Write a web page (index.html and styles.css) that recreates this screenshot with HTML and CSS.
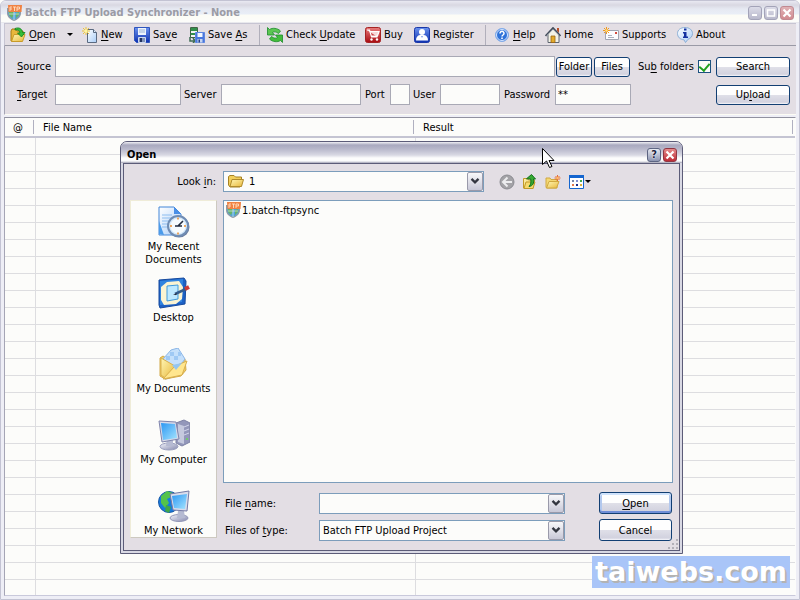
FILE: index.html
```html
<!DOCTYPE html>
<html lang="en">
<head>
<meta charset="utf-8">
<title>Batch FTP Upload Synchronizer - None</title>
<link rel="stylesheet" href="styles.css">
</head>
<body>
<svg class="defs" aria-hidden="true">
  <defs>
    <linearGradient id="gold" x1="0" y1="0" x2="1" y2="1"><stop offset="0" stop-color="#fff6b4"/><stop offset="1" stop-color="#e8b83c"/></linearGradient>
    <linearGradient id="screen" x1="0" y1="0" x2="1" y2="1"><stop offset="0" stop-color="#2d97f2"/><stop offset="1" stop-color="#a4e4ff"/></linearGradient>
    <linearGradient id="metal" x1="0" y1="0" x2="1" y2="1"><stop offset="0" stop-color="#f4f5fb"/><stop offset="1" stop-color="#8488ae"/></linearGradient>
    <linearGradient id="blue" x1="0" y1="0" x2="0" y2="1"><stop offset="0" stop-color="#6c93ee"/><stop offset="1" stop-color="#0c2fb0"/></linearGradient>
    <linearGradient id="red" x1="0" y1="0" x2="0" y2="1"><stop offset="0" stop-color="#e87c7c"/><stop offset="1" stop-color="#a80a10"/></linearGradient>
    <linearGradient id="page" x1="0" y1="0" x2="1" y2="1"><stop offset="0" stop-color="#ffffff"/><stop offset="1" stop-color="#a9cdf8"/></linearGradient>
    <symbol id="app" viewBox="0 0 16 16">
      <path d="M1 3h14v5c0 4-3 6.500-7 8C4 14.500 1 12 1 8z" fill="#8f9aa6"/>
      <path d="M2.500 6h11v3c0 2.500-2.500 4.500-5.500 5.700C5 13.500 2.500 11.500 2.500 9z" fill="#4fa5d8"/>
      <path d="M3 7l4-1 1 3-2 4-3-3zM10 8l3-1v3l-3 3z" fill="#69b365"/>
      <path d="M8 6v9M3 9h10" stroke="#d6e7ef" stroke-width=".7"/>
      <path d="M2 0h14l-.5 7H2.500z" fill="#f08243"/>
      <path d="M4 6V2h2M4 4h2M7 2h3M8.500 2V6M11 6V2h2.500v2H11" fill="none" stroke="#ffe0c4" stroke-width=".9"/>
    </symbol>
    <symbol id="open" viewBox="0 0 16 16">
      <path d="M1 14V4l1-2h4l1 2h6v3L11 14z" fill="#e9b73c" stroke="#a67a13"/>
      <path d="M1.500 14.500L4 7.500h11l-2.500 7z" fill="url(#gold)" stroke="#c89a28"/>
      <path d="M5 1.500c4-1.500 7 0 7.500 4H15L11.500 10 7.500 6H10C9.700 3.500 8 2.300 5 3z" fill="#35bd38" stroke="#0c811a" stroke-width=".8"/>
    </symbol>
    <symbol id="new" viewBox="0 0 16 16">
      <path d="M5.500 2.500h6l3 3v10h-9z" fill="url(#page)" stroke="#5b6a80"/>
      <path d="M11.500 2.500v3h3" fill="#dcecff" stroke="#5b6a80"/>
      <path d="M4 0v8M0 4h8M1 1l6 6M7 1L1 7" stroke="#edc33a"/><circle cx="4" cy="4" r="1.800" fill="#fff5a0"/>
    </symbol>
    <symbol id="save" viewBox="0 0 16 16">
      <path d="M.5.5h15v15h-13l-2-2z" fill="url(#blue)" stroke="#2f55bd"/>
      <path d="M4 1h8v7H4z" fill="#edf4fd"/><path d="M5 3h6M5 5h6" stroke="#9bb2d5"/>
      <path d="M4.500 10.500h7v5h-7z" fill="#8193b8" stroke="#cdd9f1"/><path d="M6 11h2v4H6z" fill="#22335f"/>
    </symbol>
    <symbol id="saveas" viewBox="0 0 16 16">
      <path d="M1.500.5h7v10h-7z" fill="#f4f4f4" stroke="#426346"/><path d="M2 1h6v3H2zM2 6h4v2H2z" fill="#31904a"/>
      <path d="M1 10v4h4M4 11l2 3-2 2" fill="none" stroke="#3f6c54" stroke-width="1.500"/>
      <path d="M6.500 5.500h9v10h-9z" fill="#4976dd" stroke="#5d86e0"/>
      <path d="M8.500 6h5v4h-5z" fill="#f3f8ff"/><path d="M8.500 12h5v3.500h-5z" fill="#c5d5f1"/><path d="M9.500 12.500h1.500v3H9.500z" fill="#233f82"/>
    </symbol>
    <symbol id="update" viewBox="0 0 16 16">
      <path d="M.5.5l2 2c3-2 8-1.500 11 1.500L11.500 6.500C9 4.500 7 4.500 5.500 5.500L7.500 8h-7z" fill="#5cc652" stroke="#1d8b2b" stroke-width=".8"/>
      <path d="M15.500 15.500l-2-2c-3 2-8 1.500-11-1.500L4.500 9.500c2.500 2 4.500 2 6 1L8.500 8h7z" fill="#43bd3b" stroke="#1d8b2b" stroke-width=".8"/>
    </symbol>
    <symbol id="buy" viewBox="0 0 16 16">
      <rect x=".5" y=".5" width="15" height="15" rx="2" fill="url(#red)" stroke="#a52323"/>
      <path d="M2 3h2.500l2 7h6M5 4.500h9L12.500 9H6.200" fill="#f7d9d9" stroke="#fff" stroke-width="1.200"/><circle cx="6.500" cy="12.500" r="1.200" fill="#fff"/><circle cx="12" cy="12.500" r="1.200" fill="#fff"/>
    </symbol>
    <symbol id="register" viewBox="0 0 16 16">
      <rect x=".5" y=".5" width="15" height="15" rx="2" fill="url(#blue)" stroke="#1a37a8"/>
      <path d="M2 13.500c0-3.500 1.500-5 4-5.500h4c2.500.5 4 2 4 5.500z" fill="#fff"/><circle cx="8" cy="5" r="3" fill="#fff"/><path d="M7 9h2l-1 2z" fill="#7f9ce9"/>
    </symbol>
    <symbol id="help" viewBox="0 0 16 16">
      <circle cx="8" cy="8" r="6.500" fill="#2e72d9" stroke="#86aee9"/><circle cx="8" cy="8" r="5.500" fill="none" stroke="#d6e6ff"/>
      <path d="M6 6.500c0-3 4.200-2.700 4 0C10 8 8 8 8 9.500" fill="none" stroke="#fff" stroke-width="1.500"/><path d="M7.200 10.500h1.600V12H7.200z" fill="#fff"/>
    </symbol>
    <symbol id="home" viewBox="0 0 16 16">
      <path d="M3 7v8.500h11V7L8 2z" fill="#f3f2e5" stroke="#5f6571"/><path d="M12 1h2v5l-2-2z" fill="#b95028"/>
      <path d="M.5 9L8 1l7.500 8" fill="none" stroke="#434d5b" stroke-width="1.800"/><path d="M2 8.500L8 2.500l6 6" fill="none" stroke="#cbd2d8" stroke-width=".8"/>
      <path d="M6 9h4v6.500H6z" fill="#e3ab2a" stroke="#9a6413" stroke-width=".8"/>
    </symbol>
    <symbol id="mail" viewBox="0 0 16 16">
      <path d="M2.500 3.500h13v9h-13z" fill="#fbfbfe" stroke="#a0a4b2"/><path d="M5 8.500h4M5 10.500h6" stroke="#aaafbd"/><path d="M12 5h2v2h-2z" fill="#d4493c"/>
      <path d="M3.500 0v7M0 3.500h7M1 1l5 5M6 1L1 6" stroke="#f09820"/><circle cx="3.500" cy="3.500" r="1.300" fill="#ffe17c"/>
    </symbol>
    <symbol id="about" viewBox="0 0 16 16">
      <path d="M8 .5c4.500 0 7.500 2.500 7.500 6 0 3-2 5-4.500 5.800L8.500 15.500 7 12.800C3 12.500.5 10 .5 6.500.5 3 3.500.5 8 .5z" fill="url(#page)" stroke="#8caed4"/>
      <path d="M7 1.500h2.500v2H7zM6 5h3.500v4.500H11V11H6V9.500h1v-3H6z" fill="#1431a0"/>
    </symbol>
    <symbol id="folder" viewBox="0 0 16 16">
      <path d="M.5 12V3.500l1.500-1h4l1.500 1.500h6v8.500L12 14H2z" fill="#f2cf5b" stroke="#a68224"/>
      <path d="M2 13.500L4 6.500h11.500l-2 7z" fill="url(#gold)" stroke="#b08b2c"/>
    </symbol>
    <symbol id="back" viewBox="0 0 16 16">
      <circle cx="8" cy="8" r="7" fill="#a3a2a6" stroke="#8c8c92"/><path d="M8.500 3.500L4 8l4.500 4.500M4.500 8H13" fill="none" stroke="#ececee" stroke-width="2"/>
    </symbol>
    <symbol id="up" viewBox="0 0 16 16">
      <path d="M1.500 14V4.500h4l1 1.500h6L11 14.500z" fill="url(#gold)" stroke="#c19a29"/><path d="M2 14.500L4 8h9l-2 6.500z" fill="#f7da6e" stroke="#c19a29"/>
      <path d="M4.500 4.800L9.500.5l4 4.500h-2c.7 4-.5 7-4.500 7.500 2-2 2.200-4.500 1.700-7.500z" fill="#37aa33" stroke="#11711b"/>
    </symbol>
    <symbol id="newfolder" viewBox="0 0 16 16">
      <path d="M1 13V4h4l1 1.500h6V14H1.500z" fill="#f4d873" stroke="#d0a840"/><path d="M1.500 14L4 7.500h10L11.500 14z" fill="url(#gold)" stroke="#d0a840"/>
      <path d="M12.500 1v6M9.500 4h6M10.500 2l4 4M14.500 2l-4 4" stroke="#e56b35"/><circle cx="12.500" cy="4" r="1.300" fill="#ffbb68"/>
    </symbol>
    <symbol id="views" viewBox="0 0 16 16">
      <path d="M1.500 1.500h14v13h-14z" fill="#fff" stroke="#1566cf"/><path d="M1 1h15v3H1z" fill="#1566cf"/>
      <path d="M4 6h2v2H4z" fill="#7788a8"/><path d="M8 6h2v2H8z" fill="#8390d1"/><path d="M12 6h2v2h-2z" fill="#43a74b"/><path d="M4 10h2v2H4z" fill="#e47a4a"/><path d="M8 10h2v2H8z" fill="#1b2d8b"/><path d="M12 10h2v2h-2z" fill="#dab03c"/>
    </symbol>
    <symbol id="recent" viewBox="0 0 32 32">
      <path d="M1 1h15l7 7v21H1z" fill="url(#page)" stroke="#4386d8"/><path d="M16 1v7h7z" fill="#4a8fe7"/>
      <path d="M4 9h10M4 12h13M4 15h8M4 18h6M4 21h6" stroke="#8dbdf0"/><path d="M1 28V15l5 14z" fill="#4b9bea"/>
      <circle cx="21" cy="21" r="10.500" fill="#6a7c9d"/><circle cx="20" cy="20" r="10" fill="#d5e9fa" stroke="#6f8cb4" stroke-width="2"/><circle cx="20" cy="20" r="7.500" fill="#f6fbff"/>
      <path d="M20 11.500v2M20 26.500v2M12 20h2M26 20h2" stroke="#ef8c2a" stroke-width="1.500"/><path d="M20 20l5-5M17 20h7" stroke="#222b40" stroke-width="1.600"/>
    </symbol>
    <symbol id="desktop" viewBox="0 0 32 32">
      <path d="M1 3l25-2 2 3-1 23L2 31 1 28z" fill="#1c61c5" stroke="#174b9e"/><path d="M2 4l23-2-1 23L2 28z" fill="#3184df"/>
      <path d="M3 10l6-5 12-1 4 6-1 12-6 5-12 1-3-5z" fill="#fbf4d2"/><path d="M9 9l11-1v14L9 24z" fill="#bee9ff" stroke="#419bdc"/>
      <path d="M17 17l11-5" stroke="#345d8d" stroke-width="2.500"/><path d="M27 12l4-2" stroke="#ce3b36" stroke-width="4"/><path d="M15 18l4-2-1 2z" fill="#292e3c"/>
    </symbol>
    <symbol id="documents" viewBox="0 0 32 32">
      <path d="M6 29l20-3 4-13-4 13-19 6z" fill="#888a8a" opacity=".5"/>
      <path d="M2 10l3-2 6 4 16-1 1 11-5 6-16 3-5-3z" fill="#f4ce62" stroke="#d3aa4a"/>
      <path d="M5 11L13 2l7-2 7 11-9 12z" fill="#c5e0fb" stroke="#8bb6e6"/><path d="M12 4h4v4h4v4h-4V8h-4zM20 4h3v4h-3zM8 8h4v4H8z" fill="#9fc9f4"/>
      <path d="M3 10l14 8-10 12-4-3z" fill="url(#gold)" stroke="#d9b04e"/><path d="M5 31l12-13 12-5-5 14z" fill="#ffe68e" stroke="#d9b04e"/><path d="M14 17l10-2-6 7z" fill="#94c5f0"/>
    </symbol>
    <symbol id="computer" viewBox="0 0 32 32">
      <path d="M18 4l8-3 6 3v19l-8 4-6-3z" fill="#9397ba" stroke="#7e82a5"/><path d="M20 5l6 2v18l-6-2z" fill="#c5c9de"/><path d="M26 8l5-2M26 12l5-2M26 16l5-2" stroke="#d2d5eb"/><circle cx="29" cy="20" r="1" fill="#65dd55"/>
      <ellipse cx="11" cy="27.500" rx="9" ry="3.500" fill="url(#metal)" stroke="#9a9ebd"/><path d="M9 20h6v7H8z" fill="#b6bad2"/>
      <path d="M1 2l17 1 3 17-17 3z" fill="#d7d9e9" stroke="#7f84ac"/><path d="M3 4l14 1 2 14-14 2z" fill="url(#screen)"/>
    </symbol>
    <symbol id="network" viewBox="0 0 32 32">
      <circle cx="11" cy="12" r="10.500" fill="#187bdc" stroke="#1558a7"/><path d="M3 6l6-5 6 2-2 4-4 2 2 4-4 5-4-5z" fill="#54c34b"/><path d="M8 15l5 2-2 6-4-2z" fill="#40a748"/>
      <ellipse cx="21" cy="28" rx="9" ry="3.500" fill="url(#metal)" stroke="#9196b7"/><path d="M20 21h6l1 7h-8z" fill="#b5bad2"/>
      <path d="M12 4l19-3-2 20-14-1z" fill="#d9dceb" stroke="#747aa4"/><path d="M14 6l15-2-2 15-11-1z" fill="url(#screen)"/>
    </symbol>
    <symbol id="chevron" viewBox="0 0 16 16"><path d="M4 5l4 4 4-4" fill="none" stroke="#333640" stroke-width="2.600"/></symbol>
    <symbol id="caret" viewBox="0 0 6 3"><path d="M0 0h6L3 3z" fill="#000"/></symbol>
  </defs>
</svg>

<div class="window">
  <header class="titlebar">
    <svg class="icon"><use href="#app"/></svg>
    <h1>Batch FTP Upload Synchronizer - None</h1>
    <div class="captions">
      <button class="caption" aria-label="Minimize"><svg viewBox="0 0 12 12"><path d="M3 8h5" stroke="#fff" stroke-width="2"/></svg></button>
      <button class="caption" aria-label="Maximize"><svg viewBox="0 0 12 12"><path d="M2.500 3h7v6h-7z" fill="none" stroke="#fff" stroke-width="1.500"/></svg></button>
      <button class="caption close" aria-label="Close"><svg viewBox="0 0 12 12"><path d="M2.500 2.500l7 7M9.500 2.500l-7 7" stroke="#fff" stroke-width="2.200"/></svg></button>
    </div>
  </header>

  <nav class="toolbar" aria-label="Main">
    <button class="tool"><svg class="icon"><use href="#open"/></svg><span><u>O</u>pen</span><svg class="caret"><use href="#caret"/></svg></button>
    <button class="tool"><svg class="icon"><use href="#new"/></svg><span><u>N</u>ew</span></button>
    <button class="tool"><svg class="icon"><use href="#save"/></svg><span>Sa<u>v</u>e</span></button>
    <button class="tool"><svg class="icon"><use href="#saveas"/></svg><span>Save <u>A</u>s</span></button>
    <i class="divider"></i>
    <button class="tool"><svg class="icon"><use href="#update"/></svg><span>Check <u>U</u>pdate</span></button>
    <button class="tool"><svg class="icon"><use href="#buy"/></svg><span>Buy</span></button>
    <button class="tool"><svg class="icon"><use href="#register"/></svg><span>Register</span></button>
    <i class="divider"></i>
    <button class="tool"><svg class="icon"><use href="#help"/></svg><span><u>H</u>elp</span></button>
    <button class="tool"><svg class="icon"><use href="#home"/></svg><span>Home</span></button>
    <button class="tool"><svg class="icon"><use href="#mail"/></svg><span>Supports</span></button>
    <button class="tool"><svg class="icon"><use href="#about"/></svg><span>About</span></button>
  </nav>

  <form class="settings">
    <div class="row">
      <label class="lead" for="source"><u>S</u>ource</label>
      <input class="field grow" id="source" type="text">
      <button class="btn small" type="button">Folder</button>
      <button class="btn small" type="button">Files</button>
      <label class="sub" for="sub">Su<u>b</u> folders</label>
      <input class="check" id="sub" type="checkbox" checked>
      <button class="btn action" type="button">Search</button>
    </div>
    <div class="row">
      <label class="lead" for="target"><u>T</u>arget</label>
      <input class="field target" id="target" type="text">
      <label class="server-label" for="server">Server</label>
      <input class="field server" id="server" type="text">
      <label class="port-label" for="port">Port</label>
      <input class="field port" id="port" type="text">
      <label class="user-label" for="user">User</label>
      <input class="field user" id="user" type="text">
      <label class="pass-label" for="pass">Password</label>
      <input class="field pass" id="pass" type="text" value="**">
      <button class="btn action" type="button">Up<u>l</u>oad</button>
    </div>
  </form>

  <main class="list">
    <table>
      <thead><tr><th class="mark">@</th><th class="name">File Name</th><th class="result">Result</th></tr></thead>
      <tbody>
        <tr><td></td><td></td><td></td></tr><tr><td></td><td></td><td></td></tr><tr><td></td><td></td><td></td></tr>
        <tr><td></td><td></td><td></td></tr><tr><td></td><td></td><td></td></tr><tr><td></td><td></td><td></td></tr>
        <tr><td></td><td></td><td></td></tr><tr><td></td><td></td><td></td></tr><tr><td></td><td></td><td></td></tr>
        <tr><td></td><td></td><td></td></tr><tr><td></td><td></td><td></td></tr><tr><td></td><td></td><td></td></tr>
        <tr><td></td><td></td><td></td></tr><tr><td></td><td></td><td></td></tr><tr><td></td><td></td><td></td></tr>
        <tr><td></td><td></td><td></td></tr><tr><td></td><td></td><td></td></tr><tr><td></td><td></td><td></td></tr>
        <tr><td></td><td></td><td></td></tr><tr><td></td><td></td><td></td></tr><tr><td></td><td></td><td></td></tr>
        <tr><td></td><td></td><td></td></tr><tr><td></td><td></td><td></td></tr><tr><td></td><td></td><td></td></tr>
        <tr><td></td><td></td><td></td></tr><tr><td></td><td></td><td></td></tr><tr><td></td><td></td><td></td></tr>
      </tbody>
    </table>
  </main>
</div>

<p class="watermark">taiwebs.com</p>

<section class="dialog" role="dialog" aria-labelledby="dialog-title">
  <header class="dialog-title">
    <h2 id="dialog-title">Open</h2>
    <div class="captions">
      <button class="caption query" aria-label="Help">?</button>
      <button class="caption close" aria-label="Close"><svg viewBox="0 0 12 12"><path d="M2.500 2.500l7 7M9.500 2.500l-7 7" stroke="#fff" stroke-width="2.200"/></svg></button>
    </div>
  </header>
  <div class="dialog-body">
    <div class="lookin">
      <label for="look">Look <u>i</u>n:</label>
      <span class="combo has-icon">
        <svg class="icon lead-icon"><use href="#folder"/></svg>
        <select id="look"><option>1</option></select>
        <svg class="drop"><use href="#chevron"/></svg>
      </span>
      <div class="navtools">
        <button aria-label="Back"><svg class="icon"><use href="#back"/></svg></button>
        <button aria-label="Up one level"><svg class="icon"><use href="#up"/></svg></button>
        <button aria-label="Create new folder"><svg class="icon"><use href="#newfolder"/></svg></button>
        <button class="view" aria-label="View menu"><svg class="icon"><use href="#views"/></svg><svg class="caret"><use href="#caret"/></svg></button>
      </div>
    </div>
    <nav class="places" aria-label="Places">
      <button><svg><use href="#recent"/></svg>My Recent<br>Documents</button>
      <button><svg><use href="#desktop"/></svg>Desktop</button>
      <button><svg><use href="#documents"/></svg>My Documents</button>
      <button><svg><use href="#computer"/></svg>My Computer</button>
      <button><svg><use href="#network"/></svg>My Network</button>
    </nav>
    <div class="files">
      <button class="file"><svg class="icon"><use href="#app"/></svg>1.batch-ftpsync</button>
    </div>
    <div class="choose">
      <label for="fname">File <u>n</u>ame:</label>
      <span class="combo">
        <input id="fname" type="text">
        <svg class="drop"><use href="#chevron"/></svg>
      </span>
      <button class="btn default"><u>O</u>pen</button>
      <label for="ftype">Files of <u>t</u>ype:</label>
      <span class="combo">
        <select id="ftype"><option>Batch FTP Upload Project</option></select>
        <svg class="drop"><use href="#chevron"/></svg>
      </span>
      <button class="btn">Cancel</button>
    </div>
  </div>
  <svg class="grip" viewBox="0 0 12 12"><path d="M9 1h2v2H9zM5 5h2v2H5zM9 5h2v2H9zM1 9h2v2H1zM5 9h2v2H5zM9 9h2v2H9z" fill="#b3b0b8"/></svg>
</section>

<svg class="pointer" viewBox="0 0 13 20"><path d="M.5.5v16l4-3.500 3 6.500 2.500-1-3-6h5z" fill="#fff" stroke="#000"/></svg>
</body>
</html>
```
FILE: styles.css
```css
* { box-sizing: border-box; }

html, body { height: 100%; }

body {
  margin: 0;
  overflow: hidden;
  position: relative;
  background: #fcfcfa;
  color: #000;
  font: 11px/13px "DejaVu Sans Condensed", "Noto Sans", sans-serif;
}

button, input, select { font: inherit; color: inherit; }
button { padding: 0; border: 0; background: none; white-space: nowrap; }
u { text-underline-offset: 2px; text-decoration-thickness: 1px; }
h1, h2, p { margin: 0; }
h1, h2 { font-size: 11px; line-height: 14px; }
svg { display: block; flex: none; }

.defs { position: absolute; width: 0; height: 0; }
.icon { width: 16px; height: 16px; }
.caret { width: 6px; height: 3px; }

/* main window */
.window {
  height: 100vh;
  display: flex;
  flex-direction: column;
  border: 1px solid #c3c3d3;
  border-radius: 6px 6px 0 0;
  padding: 0 3px 3px;
  background: #eeeef6;
}

.titlebar {
  flex: none;
  height: 22px;
  display: flex;
  align-items: center;
  gap: 3px;
  padding: 2px 5px 0 5px;
  margin: 0 -3px;
  background: linear-gradient(#e9e9f2 0, #d9d8e2 4px, #e6e9f2 8px, #e9eef7 13px, #fcfcf6 14px, #fcfcfa 21px, #d5d5e0 22px);
  border-radius: 5px 5px 0 0;
}
.titlebar h1 { flex: 1; color: #9b9ba5; }

.captions { display: flex; gap: 2px; }
.caption {
  width: 14px;
  height: 14px;
  border: 1px solid #a3a3b8;
  border-radius: 3px;
  background: linear-gradient(#dcdce8, #b9b9cc);
}
.caption svg { width: 12px; height: 12px; }
.caption.close { border-color: #c08991; background: linear-gradient(#e0b2b6, #d18b90); }

.toolbar {
  flex: none;
  height: 23px;
  display: grid;
  grid-template-columns: 72px 52px 55px 70px 8px 98px 49px 71px 9px 51px 58px 74px 1fr;
  align-items: center;
  padding-left: 5px;
  border: 1px solid #c7c5d3;
  border-width: 1px 0 1px 1px;
  border-bottom-color: #9a9aa6;
  background: #e3dee4;
}
.tool { display: flex; align-items: center; gap: 3px; }
.tool .caret { margin-left: 9px; }
.divider { width: 1px; height: 20px; background: #b1afbb; }

.settings {
  flex: none;
  display: flex;
  flex-direction: column;
  gap: 7px;
  padding: 10px 6px 9px 12px;
  border-left: 1px solid #a5a5b5;
  border-bottom: 1px solid #fcfcf4;
  background: #e3dee4;
}
.row { display: flex; align-items: center; }
.row label { white-space: nowrap; }
.field {
  height: 21px;
  min-width: 0;
  border: 1px solid #a9a9b5;
  background: #fcfcfa;
  padding: 0 2px;
}
.grow { flex: 1; }
.lead { width: 38px; }
.target { width: 126px; }
.server { width: 140px; }
.port { width: 20px; }
.user { width: 60px; }
.pass { width: 76px; }
.server-label { width: 40px; padding-left: 3px; }
.port-label { width: 29px; padding-left: 4px; }
.user-label { width: 30px; padding-left: 3px; }
.pass-label { width: 55px; padding-left: 4px; }

.btn {
  height: 20px;
  border: 1px solid #123f73;
  border-radius: 3px;
  background: linear-gradient(#fefefe 0 48%, #dfdfe8 52%, #d2d2df 90%, #f8f8fc);
}
.small { width: 36px; margin-left: 1px; }
.small + .small { margin-left: 2px; }
.action { width: 74px; margin-left: auto; }
.sub { width: 60px; margin-left: 8px; }
.check {
  appearance: none;
  width: 13px;
  height: 13px;
  margin: 0 5px 0 0;
  border: 1px solid #1c5180;
  background: #fcfcfa;
  display: grid;
  place-items: center;
}
.check:checked::after {
  content: "";
  width: 5px;
  height: 8px;
  margin-bottom: 2px;
  border: solid #21a121;
  border-width: 0 2px 2px 0;
  transform: rotate(40deg);
}

.list {
  flex: 1;
  min-height: 0;
  overflow: hidden;
  margin-top: 2px;
  border-top: 1px solid #91919f;
  border-left: 1px solid #a5a5b5;
  border-right: 1px solid #fcfcfa;
  border-bottom: 1px solid #c9c9db;
  background: #fcfcfa;
}
table { width: 100%; border-collapse: separate; border-spacing: 0; table-layout: fixed; }
th {
  height: 20px;
  padding: 0 0 0 7px;
  text-align: left;
  font-weight: normal;
  border-bottom: 2px solid #c4c4d2;
  background: linear-gradient(#b0b0c0, #b0b0c0) right 2px center / 1px 14px no-repeat;
}
th.mark { width: 31px; padding-left: 8px; }
th.name { width: 380px; }
td { height: 17px; padding: 0; border-right: 1px solid #dddde0; border-bottom: 1px solid #dddde0; }
td:last-child { border-right: 0; }

/* open dialog */
.dialog {
  position: absolute;
  left: 120px;
  top: 141px;
  width: 563px;
  border: 1px solid #5c5c78;
  border-radius: 7px 7px 0 0;
  padding: 0 2px 2px;
  background: #d9d9e4;
}
.dialog-title {
  height: 21px;
  display: flex;
  align-items: center;
  justify-content: space-between;
  padding: 4px 5px 0 6px;
  margin: 0 -2px;
  border-radius: 6px 6px 0 0;
  background: linear-gradient(#f0f0f5 0, #a9a9bf 3px, #b8b8cb 7px, #d8d8e3 13px, #fcfcfc 16px, #fcfcfc 19px, #a1a1b3 21px);
}
.dialog .caption { border-color: #5c6482; background: linear-gradient(#e4e7f0, #8d95b2); }
.dialog .caption.close { border-color: #913643; background: linear-gradient(#e58b8c, #bd2b35); }
.dialog .query { color: #1c2340; font-weight: bold; line-height: 12px; text-shadow: 0 0 1px #fff, 0 0 2px #fff; }

.dialog-body {
  display: grid;
  grid-template-columns: 87px 1fr;
  grid-template-rows: 21px 283px 50px;
  column-gap: 6px;
  row-gap: 8px;
  padding: 7px 6px 9px 6px;
  border: 1px solid #5c5c78;
  background: #e3dee4;
}
.lookin { grid-column: 1 / 3; display: flex; align-items: center; }
.lookin label { width: 93px; padding-right: 7px; text-align: right; }
.lookin .combo { width: 261px; }
.navtools { display: flex; gap: 7px; padding-left: 15px; }
.navtools .view { display: flex; align-items: center; gap: 1px; }

.combo { position: relative; display: block; height: 21px; }
.combo select, .combo input {
  appearance: none;
  display: block;
  width: 100%;
  height: 21px;
  padding: 0 20px 0 3px;
  border: 1px solid #7c9dbb;
  border-radius: 0;
  background: #fcfcfa;
}
.combo.has-icon select { padding-left: 25px; }
.lead-icon { position: absolute; left: 5px; top: 2px; }
.drop {
  position: absolute;
  right: 1px;
  top: 1px;
  width: 16px;
  height: 19px;
  border: 1px solid #9a9aaa;
  border-radius: 2px;
  background: linear-gradient(#f8f8fa, #c8c8d7);
  pointer-events: none;
}

.places {
  grid-row: 2 / 4;
  height: 338px;
  overflow: hidden;
  padding-top: 5px;
  border: 1px solid #cdc9c0;
  border-top-color: #efecd8;
  border-left-color: #efecd8;
  background: #fcfcfa;
}
.places button {
  width: 100%;
  height: 71px;
  display: flex;
  flex-direction: column;
  align-items: center;
}
.places svg { width: 32px; height: 32px; margin-bottom: 2px; }
.files { border: 1px solid #7c9dbb; background: #fcfcfa; padding: 1px; }
.file { display: flex; align-items: center; gap: 1px; }

.choose {
  display: grid;
  grid-template-columns: 94px 246px 73px;
  grid-template-rows: 22px 22px;
  row-gap: 5px;
  column-gap: 0;
  align-items: center;
  padding: 1px 1px 0 2px;
}
.choose .btn { width: 73px; margin-left: 34px; height: 22px; }
.btn.default { box-shadow: inset 0 2px #cfe2fb, inset 0 -2px #6f8ed8, inset 2px 0 #b2c8ee, inset -2px 0 #b2c8ee; }
.grip { position: absolute; right: 3px; bottom: 3px; width: 12px; height: 12px; }

.watermark {
  position: absolute;
  right: 10px;
  bottom: 12px;
  padding: 0 3px;
  background: #a9c5f8;
  color: #fff;
  font: bold 27px/32px "DejaVu Sans", sans-serif;
  text-shadow: 2px 2px #b3b3b3;
}
.pointer { position: absolute; left: 542px; top: 148px; width: 13px; height: 20px; }
```
